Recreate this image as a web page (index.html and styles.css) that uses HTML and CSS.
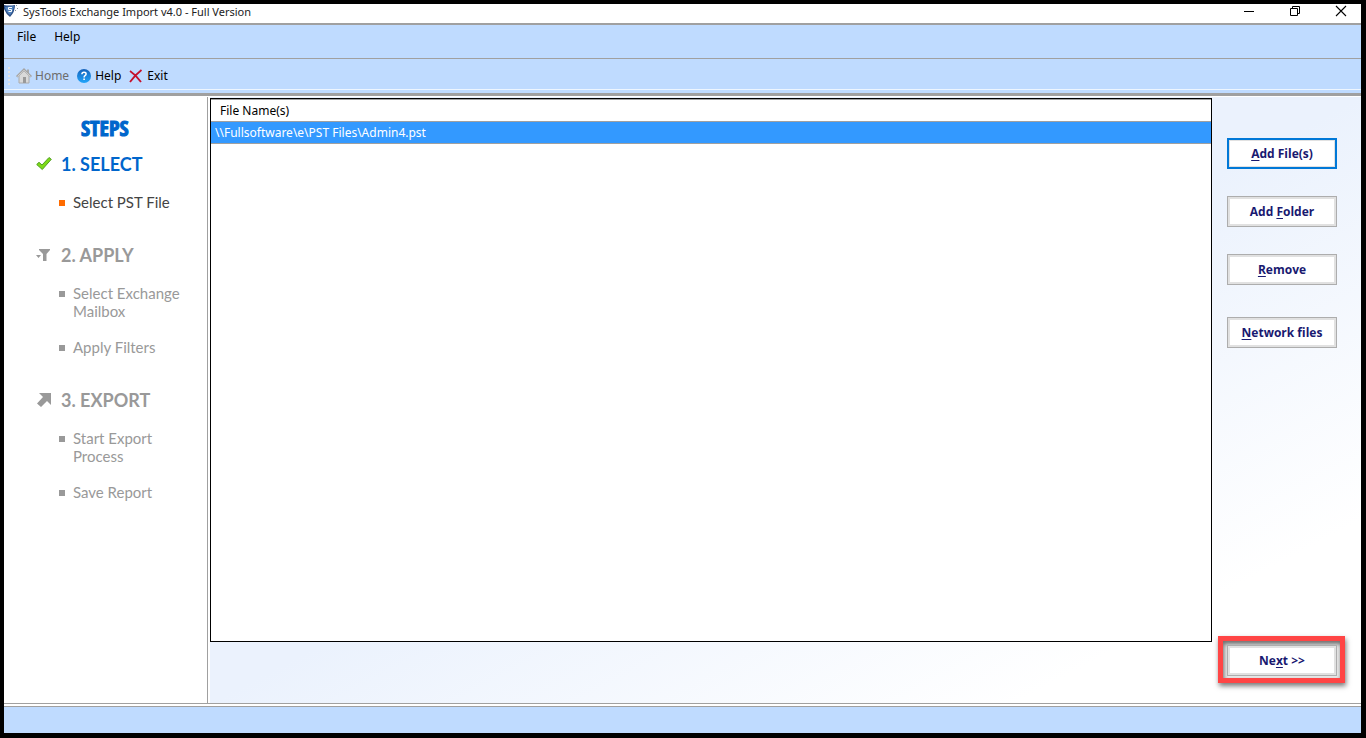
FILE: index.html
```html
<!DOCTYPE html>
<html lang="en">
<head>
<meta charset="utf-8">
<title>SysTools Exchange Import v4.0 - Full Version</title>
<link rel="stylesheet" href="styles.css">
</head>
<body>
<div class="window">
  <header class="titlebar">
    <svg class="app-icon" width="15" height="14" viewBox="0 0 15 14" aria-hidden="true">
      <path d="M0 1Q5 2 11 1Q11 8 6 13Q2 10 0 5Z" fill="#2c4f86"/>
      <path d="M1 3L10 2Q9 8 6 11Q2 8 1 3Z" fill="#5283bd"/>
      <path d="M8 3.500H4.500V5.500H7.500V7.500H4.500" fill="none" stroke="#fff" stroke-width="1"/>
      <path d="M12 1h1v1h-1zM13 4h1v1h-1zM11 6h1v1h-1z" fill="#8b929c"/>
    </svg>
    <span class="title">SysTools Exchange Import v4.0 - Full Version</span>
    <div class="controls">
      <button class="control" aria-label="Minimize"><svg width="12" height="12" viewBox="0 0 12 12"><path d="M1 6.500H11" stroke="#000"/></svg></button>
      <button class="control" aria-label="Restore"><svg width="12" height="12" viewBox="0 0 12 12" fill="none" stroke="#000"><path d="M1.500 3.500H8.500V10.500H1.500ZM3.500 3V1.500H10.500V8.500H9"/></svg></button>
      <button class="control" aria-label="Close"><svg width="12" height="12" viewBox="0 0 12 12"><path d="M1 1L11 11M11 1L1 11" stroke="#000" stroke-width="1.1"/></svg></button>
    </div>
  </header>
  <nav class="menubar">
    <button class="menu">File</button>
    <button class="menu">Help</button>
  </nav>
  <div class="toolbar">
    <span class="grip"></span>
    <button class="tool" disabled>
      <svg width="16" height="16" viewBox="0 0 16 16"><path d="M3 7.500L8 3L13 7.500V15H3Z" fill="#d9d9d9" stroke="#aaa"/><path d="M11 1.500H13V6L11 4Z" fill="#aaa"/><path d="M0.700 8.700L8 1.500L15.300 8.700" fill="none" stroke="#a5a5a5" stroke-width="2"/><path d="M1.500 8.500L8 2.300L14.500 8.500" fill="none" stroke="#ddd" stroke-width="0.800"/><path d="M7 9H10V15H7Z" fill="#999"/></svg>
      Home</button>
    <button class="tool">
      <svg width="14" height="14" viewBox="0 0 14 14"><defs><linearGradient id="info" x2="0" y2="1"><stop stop-color="#1663bb"/><stop offset="1" stop-color="#21a5fb"/></linearGradient></defs><circle cx="7" cy="7" r="7" fill="url(#info)"/><path d="M4.900 5.200Q5 3.300 7 3.300Q9.100 3.300 9.100 5Q9.100 6 8 6.700Q7.100 7.300 7.100 8.500" fill="none" stroke="#fff" stroke-width="1.500"/><path d="M6.300 9.500H7.900V11H6.300Z" fill="#fff"/></svg>
      Help</button>
    <button class="tool">
      <svg width="14" height="14" viewBox="0 0 14 14"><path d="M1 2Q7 6 12 13M12.500 1Q6 6 1 13" fill="none" stroke="#c5102c" stroke-width="1.800"/></svg>
      Exit</button>
  </div>
  <main class="workspace">
    <aside class="sidebar">
      <h1 class="steps">STEPS</h1>
      <section class="step active">
        <h2 class="step-title"><svg width="16" height="16" viewBox="0 0 16 16"><path d="M0.700 8.500L3 6.300L6 9L13 1.500L15.300 3.300L6.300 13.500Z" fill="#7ddb16" stroke="#509e22"/></svg>1. SELECT</h2>
        <ul class="tasks"><li>Select PST File</li></ul>
      </section>
      <section class="step">
        <h2 class="step-title"><svg width="16" height="16" viewBox="0 0 16 16"><path d="M3 2H14V3L10.500 7V14H7V7L3 3ZM0 8H5L2.500 11Z" fill="#999"/></svg>2. APPLY</h2>
        <ul class="tasks"><li>Select Exchange<br>Mailbox</li><li>Apply Filters</li></ul>
      </section>
      <section class="step">
        <h2 class="step-title"><svg width="16" height="16" viewBox="0 0 16 16"><path d="M3 1H15V13L11 9L5 15L1 11.500L7 5Z" fill="#999"/></svg>3. EXPORT</h2>
        <ul class="tasks"><li>Start Export<br>Process</li><li>Save Report</li></ul>
      </section>
    </aside>
    <div class="content">
      <div class="file-list">
        <table class="files">
          <thead><tr><th>File Name(s)</th></tr></thead>
          <tbody><tr><td>\\Fullsoftware\e\PST Files\Admin4.pst</td></tr></tbody>
        </table>
      </div>
      <div class="actions">
        <div class="action-group">
          <button class="action primary"><span><u>A</u>dd File(s)</span></button>
          <button class="action"><span>Add <u>F</u>older</span></button>
          <button class="action"><span><u>R</u>emove</span></button>
          <button class="action network"><span><u>N</u>etwork files</span></button>
        </div>
        <div class="highlight"><button class="action"><span>Ne<u>x</u>t &gt;&gt;</span></button></div>
      </div>
    </div>
  </main>
  <footer class="statusbar"></footer>
</div>
</body>
</html>
```
FILE: styles.css
```css
* { box-sizing: border-box; }
body { margin: 0; color: #000; font: 12px/16px "Noto Sans", "Open Sans", sans-serif; }
button { padding: 0; border: 0; background: none; color: inherit; font: inherit; }
svg { flex: none; display: block; }
.window { display: flex; flex-direction: column; height: 100vh; border: solid #000; border-width: 4px 5px 5px 4px; background: #fff; }
.titlebar { display: flex; align-items: flex-start; flex: none; height: 19px; }
.app-icon { margin-right: 4px; }
.title { font-size: 11px; color: #222; }
.controls { display: flex; margin-left: auto; margin-right: -3px; }
.control { display: grid; place-items: center; width: 46px; height: 13px; }
.menubar { display: flex; flex: none; gap: 18px; height: 36px; padding: 4px 13px; border-top: 2px solid #a0a0a0; border-bottom: 1px solid #a0a0a0; background: #bfdbff; align-items: flex-start; }
.toolbar { display: flex; flex: none; align-items: center; gap: 8px; height: 37px; padding-left: 4px; border-bottom: 3px solid #a0a0a0; background: linear-gradient(#eef6ff, #eef6ff) 0 30px / 100% 1px no-repeat #bfdbff; }
.grip { width: 2px; height: 19px; margin-right: -2px; background: repeating-linear-gradient(#e3e3e3 0 2px, #bfdbff 2px 4px); }
.tool { display: flex; align-items: center; gap: 4px; }
.tool:disabled { gap: 3px; color: #6d6d6d; }
.workspace { display: grid; grid-template-columns: 204px 1fr; flex: 1; min-height: 0; padding-top: 1px; }
.sidebar { border-right: 1px solid #a0a0a0; padding: 18px 8px 0 32px; font-family: Lato, sans-serif; }
.steps { margin: 0 0 13px 45px; color: #06c; font: 700 22px/24px "Open Sans Condensed", Lato, sans-serif; -webkit-text-stroke: 1px #06c; }
.step { margin-bottom: 32px; color: #999; }
.step-title { display: flex; align-items: center; gap: 9px; margin: 0 0 17px; font-size: 18px; line-height: 24px; font-weight: 700; }
.active .step-title { color: #06c; }
.tasks { display: grid; gap: 18px; margin: 0; padding: 0 0 0 37px; list-style: none; font-size: 15px; line-height: 18px; }
.tasks li { position: relative; }
.tasks li::before { content: ""; position: absolute; left: -14px; top: 7px; width: 6px; height: 6px; background: #999; }
.active .tasks { color: #444; }
.active .tasks li::before { background: #ff6b00; }
.content { display: grid; grid-template-columns: 1fr 149px; margin-left: 2px; background: linear-gradient(to bottom right, #ebf2fd 50%, #fff 85%); }
.file-list { margin: 1px 0 61px; border: 1px solid #000; background: #fff; }
.files { width: 100%; border-collapse: collapse; }
.files th { height: 22px; padding: 0 9px; border-bottom: 1px solid #a0a0a0; border-top: 1px solid #a0a0a0; text-align: left; font-weight: 400; }
.files td { height: 22px; padding: 0 4px; border-bottom: 1px solid #a0a0a0; background: #39f; color: #fff; }
.actions { display: flex; flex-direction: column; justify-content: space-between; align-items: flex-start; padding: 41px 0 20px 6px; }
.action-group { display: grid; gap: 27px; padding-left: 9px; }
.network { margin-top: 5px; }
.action { width: 110px; height: 31px; border: 1px solid #adadad; background: #fff; box-shadow: inset 0 0 0 2px #e1e1e1; color: #191970; font-weight: 700; font-family: "Open Sans", sans-serif; }
.primary { border: 2px solid #0078d7; box-shadow: inset 0 0 0 1px #e1e1e1; }
.action u { text-underline-offset: 2px; }
.highlight { padding: 4px 3px 2px 4px; border: 5px solid #ff4545; background: #e8e8e8; box-shadow: 1px 3px 5px #0008, inset 1px 3px 4px #0008; }
.highlight .action { display: block; }
.statusbar { flex: none; height: 30px; border-top: 1px solid #a0a0a0; background: linear-gradient(#fff 2px, #a0a0a0 2px, #a0a0a0 3px, #bfdbff 3px); }
```
